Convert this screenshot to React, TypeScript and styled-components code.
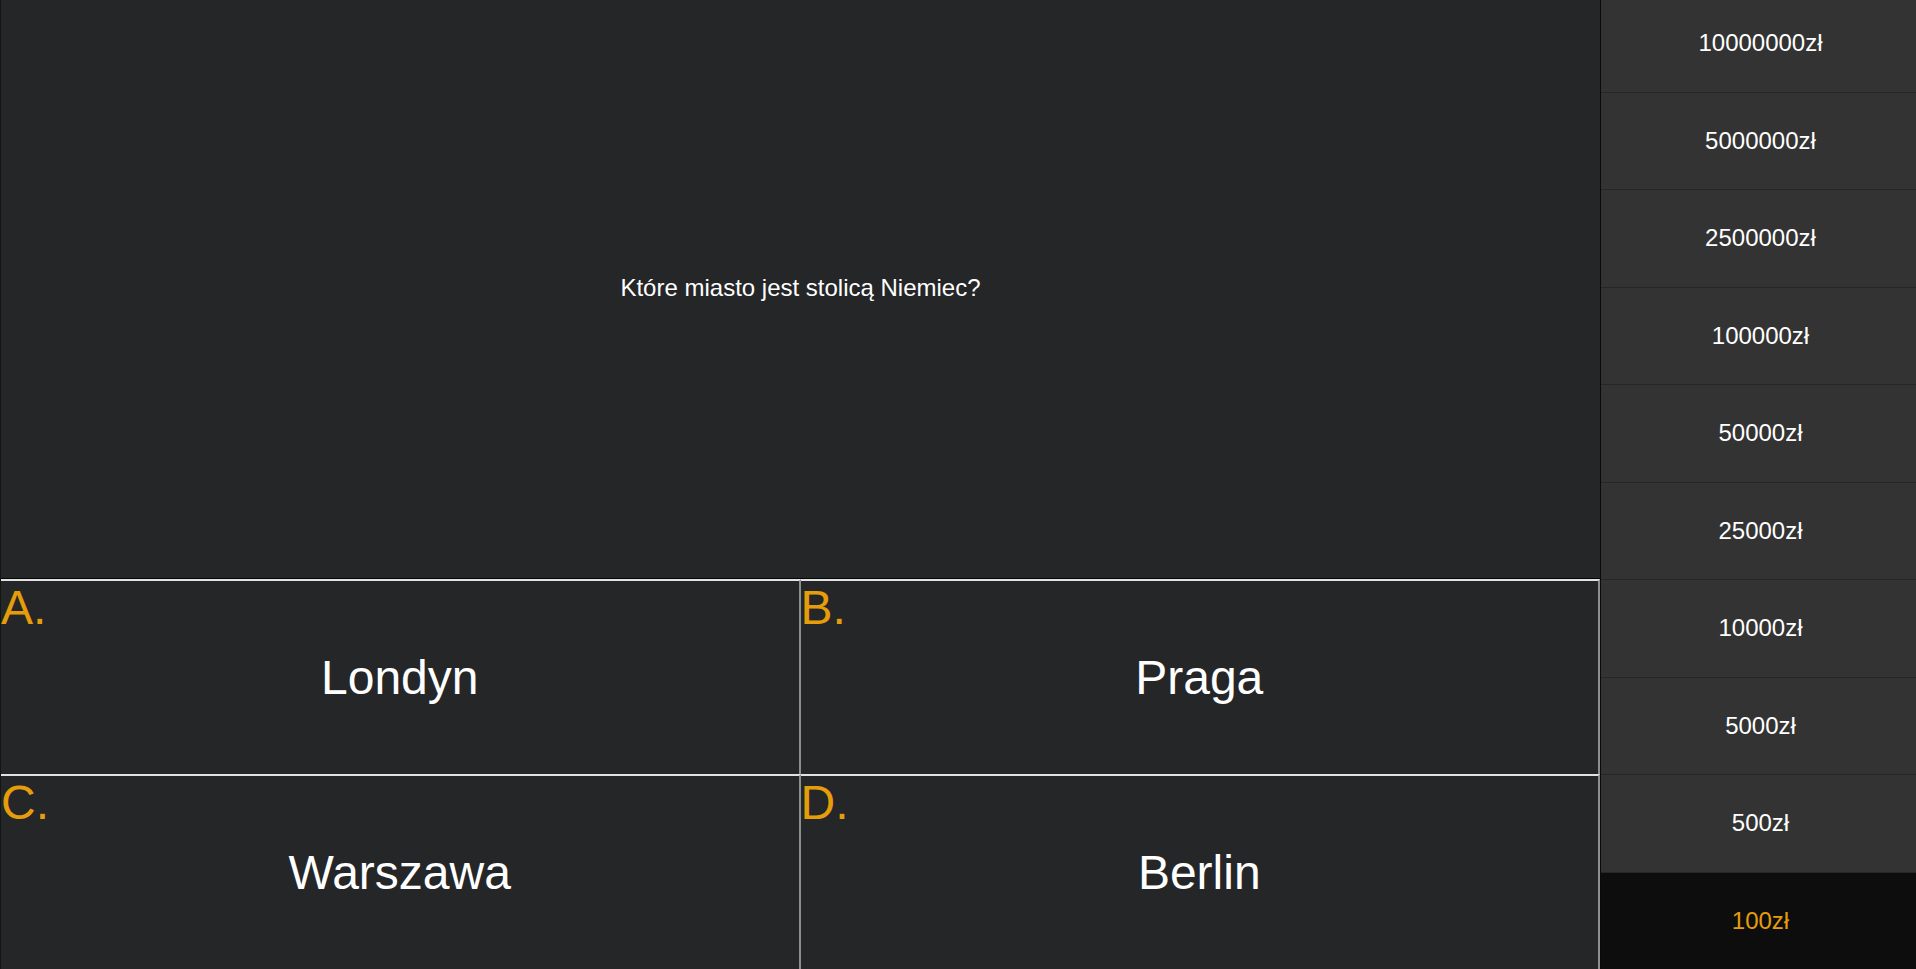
import React from "react";
import styled, { createGlobalStyle } from "styled-components";

const GlobalStyle = createGlobalStyle`
  html, body {
    margin: 0;
    padding: 0;
    height: 100%;
    overflow: hidden;
    background: #252628;
  }
  body {
    font-family: "Liberation Sans", Arial, sans-serif;
  }
  #root {
    height: 100%;
  }
`;

const Page = styled.div`
  display: grid;
  grid-template-columns: 1601px 1fr;
  height: 969px;
  width: 1916px;
`;

const Main = styled.main`
  display: grid;
  grid-template-rows: 579px 1fr;
  background: #252628;
  border-left: 1px solid #151515;
  border-right: 1px solid #0a0a0a;
  min-height: 0;
`;

const Question = styled.section`
  display: flex;
  align-items: center;
  justify-content: center;
  padding-bottom: 2px;
  border-bottom: 1px solid #050505;
  color: #ffffff;
  font-size: 24px;
`;

const Answers = styled.section`
  display: grid;
  grid-template-columns: 1fr 1fr;
  grid-template-rows: 1fr 1fr;
  min-height: 0;
`;

const AnswerBox = styled.div`
  display: grid;
  grid-template-columns: 1fr;
  grid-template-rows: 1fr;
  border-top: 2px solid #e2e2e2;
  border-right: 2px solid #8e8e8e;
  background: #252628;
  min-height: 0;
  cursor: pointer;
`;

const Letter = styled.span`
  grid-area: 1 / 1;
  align-self: start;
  justify-self: start;
  color: #e69d0b;
  font-size: 48px;
  line-height: 48px;
  padding-top: 3px;
`;

const AnswerText = styled.span`
  grid-area: 1 / 1;
  align-self: center;
  justify-self: center;
  color: #ffffff;
  font-size: 48px;
`;

const Ladder = styled.aside`
  display: grid;
  grid-template-rows: repeat(10, 96.5px);
  align-content: end;
  gap: 1px;
  background: #262626;
  overflow: hidden;
  height: 969px;
`;

const Prize = styled.div<{ $current?: boolean }>`
  display: flex;
  align-items: center;
  justify-content: center;
  padding-left: 4px;
  background: ${(p) => (p.$current ? "#0d0d0d" : "#333333")};
  color: ${(p) => (p.$current ? "#e69d0b" : "#ffffff")};
  font-size: 24px;
`;

const prizes = [
  "10000000zł",
  "5000000zł",
  "2500000zł",
  "100000zł",
  "50000zł",
  "25000zł",
  "10000zł",
  "5000zł",
  "500zł",
  "100zł",
];

const answers = [
  { letter: "A.", text: "Londyn" },
  { letter: "B.", text: "Praga" },
  { letter: "C.", text: "Warszawa" },
  { letter: "D.", text: "Berlin" },
];

export default function App() {
  return (
    <>
      <GlobalStyle />
      <Page>
        <Main>
          <Question>Które miasto jest stolicą Niemiec?</Question>
          <Answers>
            {answers.map((a) => (
              <AnswerBox key={a.letter}>
                <Letter>{a.letter}</Letter>
                <AnswerText>{a.text}</AnswerText>
              </AnswerBox>
            ))}
          </Answers>
        </Main>
        <Ladder>
          {prizes.map((p, i) => (
            <Prize key={p} $current={i === prizes.length - 1}>
              {p}
            </Prize>
          ))}
        </Ladder>
      </Page>
    </>
  );
}
